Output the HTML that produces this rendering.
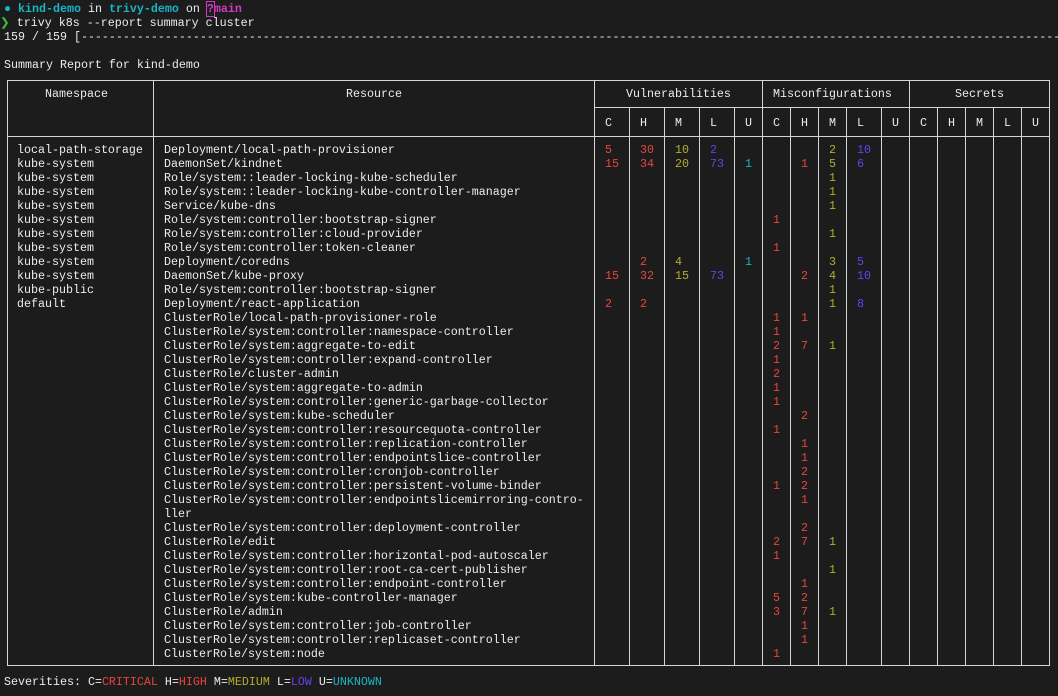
<!DOCTYPE html>
<html><head><meta charset="utf-8"><style>
body{margin:0;width:1058px;height:696px;background:#1c1c1c;overflow:hidden;position:relative;font-family:"Liberation Mono",monospace;font-size:11.67px;color:#ececec;}
.l{position:absolute;left:4px;white-space:pre;line-height:14px;height:14px;margin-top:1px}
.h{position:absolute;height:1px;background:#d6d6d6}
.v{position:absolute;width:1px;background:#d6d6d6}
.r{position:absolute;left:0;height:14px;line-height:14px;width:1058px;white-space:pre;margin-top:1px}
.r span,.t{position:absolute;white-space:pre}
.ns{left:17px}.rs{left:164px}
.a{left:605px}.b{left:640px}.c{left:675px}.d{left:710px}.e{left:745px}
.f{left:773px}.g{left:801px}.i{left:829px}.j{left:857px}
.R{color:#e8463a}.Y{color:#b3ad2e}.P{color:#6a3ff0}.C{color:#1ab4c6}
.cy{color:#1ab4c6;font-weight:bold}.mg{color:#d33bc7;font-weight:bold}
</style></head><body>
<div class="l" style="top:1px"><span class="cy">● kind-demo</span> in <span class="cy">trivy-demo</span> on <span class="mg"><span style="outline:1px solid #d33bc7">?</span>main</span></div>
<div class="l" style="top:15px;left:0"><span style="color:#3cc13c">❯</span> trivy k8s --report summary cluster</div>
<div class="l" style="top:29px">159 / 159 [------------------------------------------------------------------------------------------------------------------------------------------------</div>
<div class="l" style="top:57px">Summary Report for kind-demo</div>

<div class="h" style="left:7px;width:1043px;top:80px"></div>
<div class="h" style="left:594px;width:456px;top:107px"></div>
<div class="h" style="left:7px;width:1043px;top:136px"></div>
<div class="h" style="left:7px;width:1043px;top:665px"></div>
<div class="v" style="left:7px;top:80px;height:585px"></div>
<div class="v" style="left:153px;top:80px;height:585px"></div>
<div class="v" style="left:594px;top:80px;height:585px"></div>
<div class="v" style="left:762px;top:80px;height:585px"></div>
<div class="v" style="left:909px;top:80px;height:585px"></div>
<div class="v" style="left:1049px;top:80px;height:585px"></div>
<div class="v" style="left:629px;top:107px;height:558px"></div>
<div class="v" style="left:664px;top:107px;height:558px"></div>
<div class="v" style="left:699px;top:107px;height:558px"></div>
<div class="v" style="left:734px;top:107px;height:558px"></div>
<div class="v" style="left:790px;top:107px;height:558px"></div>
<div class="v" style="left:818px;top:107px;height:558px"></div>
<div class="v" style="left:846px;top:107px;height:558px"></div>
<div class="v" style="left:881px;top:107px;height:558px"></div>
<div class="v" style="left:937px;top:107px;height:558px"></div>
<div class="v" style="left:965px;top:107px;height:558px"></div>
<div class="v" style="left:993px;top:107px;height:558px"></div>
<div class="v" style="left:1021px;top:107px;height:558px"></div>

<div class="r" style="top:86px"><span style="left:45px">Namespace</span><span style="left:346px">Resource</span><span style="left:626px">Vulnerabilities</span><span style="left:773px">Misconfigurations</span><span style="left:955px">Secrets</span></div>
<div class="r" style="top:115px"><span style="left:605px">C</span><span style="left:640px">H</span><span style="left:675px">M</span><span style="left:710px">L</span><span style="left:745px">U</span><span style="left:773px">C</span><span style="left:801px">H</span><span style="left:829px">M</span><span style="left:857px">L</span><span style="left:892px">U</span><span style="left:920px">C</span><span style="left:948px">H</span><span style="left:976px">M</span><span style="left:1004px">L</span><span style="left:1032px">U</span></div>

<div class="r" style="top:142px"><span class="ns">local-path-storage</span><span class="rs">Deployment/local-path-provisioner</span><span class="a R">5</span><span class="b R">30</span><span class="c Y">10</span><span class="d P">2</span><span class="i Y">2</span><span class="j P">10</span></div>
<div class="r" style="top:156px"><span class="ns">kube-system</span><span class="rs">DaemonSet/kindnet</span><span class="a R">15</span><span class="b R">34</span><span class="c Y">20</span><span class="d P">73</span><span class="e C">1</span><span class="g R">1</span><span class="i Y">5</span><span class="j P">6</span></div>
<div class="r" style="top:170px"><span class="ns">kube-system</span><span class="rs">Role/system::leader-locking-kube-scheduler</span><span class="i Y">1</span></div>
<div class="r" style="top:184px"><span class="ns">kube-system</span><span class="rs">Role/system::leader-locking-kube-controller-manager</span><span class="i Y">1</span></div>
<div class="r" style="top:198px"><span class="ns">kube-system</span><span class="rs">Service/kube-dns</span><span class="i Y">1</span></div>
<div class="r" style="top:212px"><span class="ns">kube-system</span><span class="rs">Role/system:controller:bootstrap-signer</span><span class="f R">1</span></div>
<div class="r" style="top:226px"><span class="ns">kube-system</span><span class="rs">Role/system:controller:cloud-provider</span><span class="i Y">1</span></div>
<div class="r" style="top:240px"><span class="ns">kube-system</span><span class="rs">Role/system:controller:token-cleaner</span><span class="f R">1</span></div>
<div class="r" style="top:254px"><span class="ns">kube-system</span><span class="rs">Deployment/coredns</span><span class="b R">2</span><span class="c Y">4</span><span class="e C">1</span><span class="i Y">3</span><span class="j P">5</span></div>
<div class="r" style="top:268px"><span class="ns">kube-system</span><span class="rs">DaemonSet/kube-proxy</span><span class="a R">15</span><span class="b R">32</span><span class="c Y">15</span><span class="d P">73</span><span class="g R">2</span><span class="i Y">4</span><span class="j P">10</span></div>
<div class="r" style="top:282px"><span class="ns">kube-public</span><span class="rs">Role/system:controller:bootstrap-signer</span><span class="i Y">1</span></div>
<div class="r" style="top:296px"><span class="ns">default</span><span class="rs">Deployment/react-application</span><span class="a R">2</span><span class="b R">2</span><span class="i Y">1</span><span class="j P">8</span></div>
<div class="r" style="top:310px"><span class="rs">ClusterRole/local-path-provisioner-role</span><span class="f R">1</span><span class="g R">1</span></div>
<div class="r" style="top:324px"><span class="rs">ClusterRole/system:controller:namespace-controller</span><span class="f R">1</span></div>
<div class="r" style="top:338px"><span class="rs">ClusterRole/system:aggregate-to-edit</span><span class="f R">2</span><span class="g R">7</span><span class="i Y">1</span></div>
<div class="r" style="top:352px"><span class="rs">ClusterRole/system:controller:expand-controller</span><span class="f R">1</span></div>
<div class="r" style="top:366px"><span class="rs">ClusterRole/cluster-admin</span><span class="f R">2</span></div>
<div class="r" style="top:380px"><span class="rs">ClusterRole/system:aggregate-to-admin</span><span class="f R">1</span></div>
<div class="r" style="top:394px"><span class="rs">ClusterRole/system:controller:generic-garbage-collector</span><span class="f R">1</span></div>
<div class="r" style="top:408px"><span class="rs">ClusterRole/system:kube-scheduler</span><span class="g R">2</span></div>
<div class="r" style="top:422px"><span class="rs">ClusterRole/system:controller:resourcequota-controller</span><span class="f R">1</span></div>
<div class="r" style="top:436px"><span class="rs">ClusterRole/system:controller:replication-controller</span><span class="g R">1</span></div>
<div class="r" style="top:450px"><span class="rs">ClusterRole/system:controller:endpointslice-controller</span><span class="g R">1</span></div>
<div class="r" style="top:464px"><span class="rs">ClusterRole/system:controller:cronjob-controller</span><span class="g R">2</span></div>
<div class="r" style="top:478px"><span class="rs">ClusterRole/system:controller:persistent-volume-binder</span><span class="f R">1</span><span class="g R">2</span></div>
<div class="r" style="top:492px"><span class="rs">ClusterRole/system:controller:endpointslicemirroring-contro-</span><span class="g R">1</span></div>
<div class="r" style="top:506px"><span class="rs">ller</span></div>
<div class="r" style="top:520px"><span class="rs">ClusterRole/system:controller:deployment-controller</span><span class="g R">2</span></div>
<div class="r" style="top:534px"><span class="rs">ClusterRole/edit</span><span class="f R">2</span><span class="g R">7</span><span class="i Y">1</span></div>
<div class="r" style="top:548px"><span class="rs">ClusterRole/system:controller:horizontal-pod-autoscaler</span><span class="f R">1</span></div>
<div class="r" style="top:562px"><span class="rs">ClusterRole/system:controller:root-ca-cert-publisher</span><span class="i Y">1</span></div>
<div class="r" style="top:576px"><span class="rs">ClusterRole/system:controller:endpoint-controller</span><span class="g R">1</span></div>
<div class="r" style="top:590px"><span class="rs">ClusterRole/system:kube-controller-manager</span><span class="f R">5</span><span class="g R">2</span></div>
<div class="r" style="top:604px"><span class="rs">ClusterRole/admin</span><span class="f R">3</span><span class="g R">7</span><span class="i Y">1</span></div>
<div class="r" style="top:618px"><span class="rs">ClusterRole/system:controller:job-controller</span><span class="g R">1</span></div>
<div class="r" style="top:632px"><span class="rs">ClusterRole/system:controller:replicaset-controller</span><span class="g R">1</span></div>
<div class="r" style="top:646px"><span class="rs">ClusterRole/system:node</span><span class="f R">1</span></div>

<div class="l" style="top:674px">Severities: C=<span class="R">CRITICAL</span> H=<span class="R">HIGH</span> M=<span class="Y">MEDIUM</span> L=<span class="P">LOW</span> U=<span class="C">UNKNOWN</span></div>
</body></html>
